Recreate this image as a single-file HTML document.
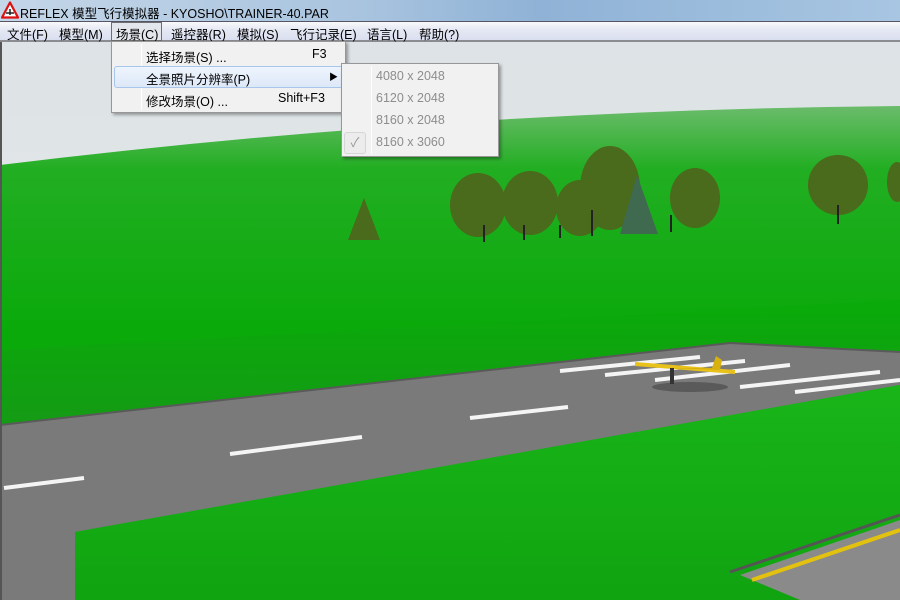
<!DOCTYPE html>
<html><head><meta charset="utf-8"><style>
*{margin:0;padding:0;box-sizing:border-box}
body{width:900px;height:600px;overflow:hidden;position:relative;font-family:"Liberation Sans","Noto Sans CJK SC",sans-serif;font-size:12px;color:#000;background:#e6e8e8}
#title{position:absolute;left:0;top:0;width:900px;height:21px;background:linear-gradient(90deg,#c4d6e8 0%,#a9c4df 40%,#8fb2d6 60%,#a8c6e2 100%);}
#title span{position:absolute;left:20px;top:3px;font-size:12.5px;color:#000}
#menu{position:absolute;left:0;top:21px;width:900px;height:21px;background:linear-gradient(#f8f9fb,#e6e9f4 40%,#dadff0);border-top:1px solid #556;border-bottom:2px solid #8a8c92}
#menu span{position:absolute;top:2px;font-size:12.5px}
#scene{position:absolute;left:0;top:42px}
.dd{position:absolute;background:#f1f1f1;border:1px solid #979797;box-shadow:2px 2px 3px rgba(0,0,0,.35)}
.it{position:absolute;font-size:12.5px}
.gr{color:#8d8d8d}
</style></head><body>
<div id="title">
<svg width="18" height="18" style="position:absolute;left:1px;top:1px" viewBox="0 0 18 18"><path d="M9 1.5L17 16.5H1Z" fill="#fff" stroke="#d11" stroke-width="2.2" stroke-linejoin="round"/><path d="M5 12h8M9 8v6" stroke="#222" stroke-width="1.5"/></svg>
<span>REFLEX 模型飞行模拟器 - KYOSHO\TRAINER-40.PAR</span></div>
<div id="menu">
<span style="left:7px">文件(F)</span><span style="left:59px">模型(M)</span>
<div style="position:absolute;left:111px;top:0;width:51px;height:19px;border:1px solid #6e6e6e;background:#e4e6ee"></div>
<span style="left:116px">场景(C)</span><span style="left:171px">遥控器(R)</span><span style="left:237px">模拟(S)</span><span style="left:290px">飞行记录(E)</span><span style="left:367px">语言(L)</span><span style="left:419px">帮助(?)</span>
</div>
<svg id="scene" width="900" height="558" viewBox="0 42 900 558">
<defs>
<linearGradient id="sky" x1="0" y1="0" x2="0" y2="1"><stop offset="0" stop-color="#dde3e6"/><stop offset="1" stop-color="#e9ebea"/></linearGradient>
<linearGradient id="hill" x1="0" y1="100" x2="0" y2="330" gradientUnits="userSpaceOnUse"><stop offset="0" stop-color="#72bd72"/><stop offset="0.3" stop-color="#22ae22"/><stop offset="1" stop-color="#0aaa0a"/></linearGradient>
<linearGradient id="tall" x1="0" y1="310" x2="0" y2="430" gradientUnits="userSpaceOnUse"><stop offset="0" stop-color="#0aaa0a"/><stop offset="1" stop-color="#159a15"/></linearGradient>
<linearGradient id="front" x1="0" y1="400" x2="0" y2="600" gradientUnits="userSpaceOnUse"><stop offset="0" stop-color="#18b418"/><stop offset="1" stop-color="#10a410"/></linearGradient>
</defs>
<rect x="0" y="42" width="900" height="558" fill="url(#sky)"/>
<path d="M0 165 Q450 110 900 106 V600 H0Z" fill="url(#hill)"/>
<path d="M0 350 L900 300 V360 L730 343 L0 425Z" fill="url(#tall)"/>
<path d="M0 425 L730 343 L900 352 V385 L75 532 V600 H0Z" fill="#7a7a7a"/>
<path d="M0 425 L730 343 L900 352" fill="none" stroke="#5a5a5a" stroke-width="2"/>
<g stroke="#f4f4f4" stroke-width="4">
<line x1="4" y1="488" x2="84" y2="478"/><line x1="230" y1="454" x2="362" y2="437"/><line x1="470" y1="418" x2="568" y2="407"/>
<line x1="560" y1="371" x2="700" y2="357"/><line x1="605" y1="375" x2="745" y2="361"/><line x1="655" y1="380" x2="790" y2="365"/><line x1="740" y1="387" x2="880" y2="372"/><line x1="795" y1="392" x2="900" y2="380"/>
</g>
<path d="M75 532 L900 385 V520 L740 575 L800 600 H75Z" fill="url(#front)"/>
<path d="M740 575 L900 520 V600 H800Z" fill="#8a8a8a"/>
<path d="M752 580 L900 530" stroke="#e2c20e" stroke-width="4"/>
<path d="M730 572 L900 515" stroke="#555" stroke-width="3"/>
<ellipse cx="690" cy="387" rx="38" ry="5" fill="#444" opacity=".6"/>
<path d="M635 362 L735 370 L735 374 L635 366Z" fill="#e8c21a"/><path d="M668 368 L720 370 L722 360 L716 356 L712 368 Z" fill="#d8b010"/><rect x="670" y="368" width="4" height="16" fill="#333"/>
<g fill="#4a6a1c">
<path d="M364 198 L380 240 L348 240Z"/><ellipse cx="478" cy="205" rx="28" ry="32"/><ellipse cx="530" cy="203" rx="28" ry="32"/><ellipse cx="580" cy="208" rx="24" ry="28"/><ellipse cx="610" cy="188" rx="30" ry="42"/><path d="M637 175 L658 234 L620 234Z" fill="#3f6a4f"/><ellipse cx="695" cy="198" rx="25" ry="30"/><ellipse cx="838" cy="185" rx="30" ry="30"/><ellipse cx="897" cy="182" rx="10" ry="20"/>
</g>
<g stroke="#222" stroke-width="2"><line x1="484" y1="225" x2="484" y2="242"/><line x1="524" y1="225" x2="524" y2="240"/><line x1="560" y1="225" x2="560" y2="238"/><line x1="592" y1="210" x2="592" y2="236"/><line x1="671" y1="215" x2="671" y2="232"/><line x1="838" y1="205" x2="838" y2="224"/></g>
<rect x="0" y="42" width="2" height="558" fill="#555"/>
</svg>
<div class="dd" style="left:111px;top:41px;width:235px;height:72px">
<div style="position:absolute;left:29px;top:2px;width:1px;height:66px;background:#e0e0e0;border-right:1px solid #fff"></div>
<div style="position:absolute;left:2px;top:24px;width:229px;height:22px;border:1px solid #a8c6ea;border-radius:3px;background:linear-gradient(#eef4fc,#dde8f8)"></div>
<span class="it" style="left:34px;top:5px">选择场景(S) ...</span><span class="it" style="left:200px;top:5px">F3</span>
<span class="it" style="left:34px;top:27px">全景照片分辨率(P)</span><span class="it" style="left:217px;top:28px;font-size:9px">▶</span>
<span class="it" style="left:34px;top:49px">修改场景(O) ...</span><span class="it" style="left:166px;top:49px">Shift+F3</span>
</div>
<div class="dd" style="left:341px;top:63px;width:158px;height:94px">
<div style="position:absolute;left:29px;top:2px;width:1px;height:88px;background:#e0e0e0;border-right:1px solid #fff"></div>
<span class="it gr" style="left:34px;top:5px">4080 x 2048</span>
<span class="it gr" style="left:34px;top:27px">6120 x 2048</span>
<span class="it gr" style="left:34px;top:49px">8160 x 2048</span>
<div style="position:absolute;left:2px;top:68px;width:22px;height:22px;border:1px solid #d6d6d6;border-radius:3px;background:#ececec;color:#999;text-align:center;line-height:20px;font-size:13px">✓</div>
<span class="it gr" style="left:34px;top:71px">8160 x 3060</span>
</div>
</body></html>
